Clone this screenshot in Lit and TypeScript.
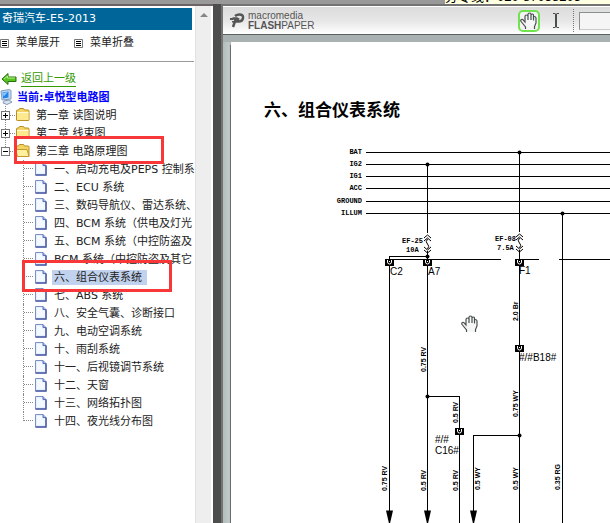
import { LitElement, html, svg, css } from "lit";
import { customElement } from "lit/decorators.js";

const leaves = [
  "一、启动充电及PEPS 控制系统",
  "二、ECU 系统",
  "三、数码导航仪、雷达系统、",
  "四、BCM 系统（供电及灯光",
  "五、BCM 系统（中控防盗及",
  "BCM 系统（中控防盗及其它",
  "六、组合仪表系统",
  "七、ABS 系统",
  "八、安全气囊、诊断接口",
  "九、电动空调系统",
  "十、雨刮系统",
  "十一、后视镜调节系统",
  "十二、天窗",
  "十三、网络拓扑图",
  "十四、夜光线分布图",
];
const current = 6;

const chapters = [
  { name: "第一章 读图说明", open: false },
  { name: "第二章 线束图", open: false },
  { name: "第三章 电路原理图", open: true },
];

const handPath =
  "M5.5 17v-2L1.5 10Q0 8 1.5 7.5T4 9l1 1V4.500q0-1.500 1.500-1.500T8 4.500V8 2.500Q8 1 9.500 1T11 2.500V8 3.500Q11 2 12.300 2T13.500 3.500V8.500 5.500q0-1 1-1t1.500 1.500v5l-1.500 3.500V17";

const hand = html`<svg width="18" height="18" viewBox="0 0 18 18" aria-hidden="true">
  <path d=${handPath} fill="#f6f6f6" stroke="#48504f" stroke-width="1.2" />
</svg>`;

const listIcon = html`<svg width="9" height="9" viewBox="0 0 9 9" aria-hidden="true">
  <path d="M.5 .5h8v8h-8z" fill="#fff" stroke="#777" />
  <path d="M2 2.500h5M2 4.500h5M2 6.500h5" stroke="#000" />
</svg>`;

const folderIcon = (open: boolean) => html`<svg width="16" height="14" viewBox="0 0 16 14" aria-hidden="true">
  <path d="M1.500 12V3q0-1 1-1h1l1-1.500h4L9.500 2H13q1 0 1 1v9q0 .5-1 .5H2.500q-1 0-1-.5z" fill="#f4d465" stroke="#b98f22" />
  ${open
    ? svg`<path d="M.5 5.500h11.500l2 7H2.500z" fill="#fff0a0" stroke="#c49a2c" />`
    : svg`<path d="M2 4.500h11.500v7.500H2z" fill="#ffe98e" /><path d="M2 4.500h11.500" stroke="#fffbd8" />`}
</svg>`;

const pageIcon = html`<svg width="14" height="14" viewBox="0 0 14 14" aria-hidden="true">
  <path d="M1.500 .5h7.500l3 3v9.500h-10.500z" fill="#e3f0ff" stroke="#7f8fc4" />
  <path d="M3 2h5v3h3v6H3z" fill="#fff" opacity=".6" />
  <path d="M12 3.500v9.500H1.500" fill="none" stroke="#4f5ea6" stroke-width="1.500" />
  <path d="M9 .5v3h3" fill="#9db9ee" stroke="#5b6db5" />
</svg>`;

const buses: [string, number][] = [
  ["BAT", 152], ["IG2", 164], ["IG1", 176], ["ACC", 188], ["GROUND", 201], ["ILLUM", 213],
];
const wires: [string, number, number][] = [
  ["0.75 RV", 426, 372], ["0.5 RV", 458, 423], ["0.75 RV", 387, 491], ["0.5 RV", 426, 491],
  ["0.5 RV", 458, 491], ["0.5 WY", 480, 490], ["2.0 Br", 518, 321], ["0.75 WY", 518, 417],
  ["0.5 WY", 518, 490], ["0.35 RG", 560, 490],
];
const dots = [[427, 164], [519, 152], [562, 213], [427, 256], [427, 396], [519, 435]];
const plugs = [[389, 262], [427, 262], [519, 262], [519, 348], [459, 431]];
const fuses = [[427, 235], [519, 234]];
const arrows = [389, 427, 473];

@customElement("app-root")
export class AppRoot extends LitElement {
  static styles = css`
    :host {
      display: flex;
      flex-direction: column;
      height: 100vh;
      overflow: hidden;
      background: #fff;
      color: #222;
      font: 11px/18px "DejaVu Sans", "Noto Sans CJK SC", sans-serif;
    }
    * { box-sizing: border-box; }
    svg { display: block; flex: none; }
    a { color: inherit; text-decoration: none; }
    button { border: 0; padding: 0; background: none; font: inherit; color: inherit; }
    .strip {
      display: flex;
      justify-content: flex-end;
      align-items: flex-end;
      flex: none;
      height: 4px;
      overflow: hidden;
      background: #999;
    }
    .notice {
      width: 165px;
      height: 16px;
      background: #ffffe1;
      color: #000;
      font: 13px/18px "Liberation Sans", "Noto Sans CJK SC", sans-serif;
      white-space: nowrap;
    }
    .frames { display: flex; flex: 1; min-height: 0; }
    .side { display: flex; flex: none; width: 213px; border-top: 2px solid #6b6365; overflow: hidden; }
    .menu { flex: 1; min-width: 0; overflow: hidden; white-space: nowrap; }
    h1 {
      margin: 2px 3px 0 0;
      padding: 0 2px;
      height: 22px;
      background: #069;
      color: #fff;
      font: 11px/22px "DejaVu Sans", "Noto Sans CJK SC", sans-serif;
    }
    .tools { display: flex; height: 32px; margin-right: 1px; padding-bottom: 5px; gap: 14px; align-items: center; border-bottom: 1px solid #999; }
    .tools button { display: flex; align-items: center; gap: 7px; }
    .back { display: flex; align-items: center; height: 19px; margin-top: 7px; gap: 4px; padding-left: 1px; color: #390; }
    .back span { border-bottom: 1px solid #390; line-height: 15px; }
    .now { display: flex; align-items: center; height: 18px; gap: 4px; color: #00f; font-weight: bold; }
    .now span { padding-top: 2px; }
    ul { margin: 0; padding: 0; list-style: none; }
    .chapter { display: flex; align-items: center; height: 18px; position: relative; }
    .chapter button {
      width: 9px;
      height: 9px;
      margin-left: 1px;
      border: 1px solid #777;
      background: #fff;
      color: #000;
      display: grid;
      place-items: center;
    }
    .dash { width: 5px; border-top: 1px dotted #888; }
    .stem { position: absolute; left: 5px; top: 14px; height: 9px; border-left: 1px dotted #888; }
    .top { top: 0; height: 5px; }
    .chapter a { padding: 2px 0 0 5px; }
    .leaves { margin-left: 23px; }
    .leaf { position: relative; display: flex; align-items: center; height: 18px; }
    .leaf::before {
      content: "";
      flex: none;
      width: 10px;
      height: 18px;
      border-left: 1px dotted #888;
      background: repeating-linear-gradient(90deg, #888 0 1px, transparent 1px 2px) 0 8px / 100% 1px no-repeat;
    }
    .leaf:last-child::before { height: 9px; align-self: flex-start; }
    .leaf a { margin-left: 4px; padding: 0 2px; line-height: 15px; }
    .picked a { background: #c1d2ee; padding-right: 5px; }
    .mark { position: absolute; border: 3px solid #f83838; width: 150px; z-index: 1; }
    .mark-chapter { left: 14px; top: -6px; height: 28px; }
    .mark-leaf { left: -1px; top: -8px; height: 32px; }
    .scroll { width: 18px; background: #eee; border-left: 1px solid #e2e2e2; border-right: 2px solid #fff; }
    .scroll button { display: flex; justify-content: center; width: 100%; padding-top: 7px; }
    .split { flex: none; width: 8px; background: #4d4d4d; }
    .viewer {
      display: flex;
      flex-direction: column;
      flex: 1;
      min-width: 0;
      border: solid #737373;
      border-width: 2px 0 0 2px;
      background: linear-gradient(90deg, #b3bebc, #c0cac8 6px, #a9b2b1 8px);
    }
    .bar {
      display: flex;
      align-items: center;
      flex: none;
      height: 29px;
      border-top: 1px solid #fff;
      border-bottom: 1px solid #59605f;
      background: linear-gradient(#dcdcdc, #e6e6e6 50%, #fff);
      overflow: hidden;
    }
    .logo { margin-left: 7px; }
    .brand { margin-left: 3px; width: 66px; color: #555; font: 10px/10px "Liberation Sans", sans-serif; }
    .brand div { white-space: nowrap; }
    .controls { display: flex; align-items: center; margin-left: auto; }
    .grab { display: grid; place-items: center; width: 22px; height: 22px; border: 2px solid #71e34f; border-radius: 5px; background: #f4f4f4; }
    .select { margin-left: 12px; }
    .rule { height: 23px; margin: 0 5px 0 13px; border-left: 1px dotted #777; }
    input { width: 31px; height: 18px; border: solid #8a8f8f; border-width: 1px 0 1px 1px; border-bottom-color: #ccc; background: #f5f5f5; padding: 0; }
    .desk { display: flex; flex: 1; min-height: 0; padding: 7px 0 0 8px; background: linear-gradient(#a9b2b1, #a9b2b1) no-repeat 0 0 / 100% 7px; }
    .paper { flex: 1; min-width: 0; background: #fff; box-shadow: -1px 3px 0 #68706f; overflow: hidden; }
    .line { stroke: #000; stroke-width: 1; fill: none; shape-rendering: crispEdges; }
    .title { font: bold 17px "Noto Sans CJK SC", sans-serif; }
    .tag { font: bold 7px "Liberation Mono", monospace; }
    .wire { font: bold 7px "Liberation Sans", sans-serif; }
    .pin { font: 10px "Liberation Sans", sans-serif; }
    .end { text-anchor: end; }
  `;

  private diagram() {
    return html`<svg width="100%" height="100%" role="img" aria-label="六、组合仪表系统">
      <g transform="translate(-231 -42)">
        <text class="title" x="264" y="116">六、组合仪表系统</text>
        ${buses.map(([name, y]) => svg`
          <text class="tag end" x="362" y=${y + 2}>${name}</text>
          <path class="line" d="M366 ${y}.5H3000" />`)}
        <path class="line" d="M427.500 164V233M427.500 251V523M519.500 152V232M519.500 250V523M562.500 213V523" />
        <path class="line" d="M427.500 256.500H389.500V511M385 259.500H501M515 259.500H539M559 259.500H3000" />
        <path class="line" d="M427.500 396.500H459.500V523M519.500 435.500H473.500V511" />
        ${dots.map(([x, y]) => svg`<circle cx="${x}.5" cy="${y}.5" r="2" />`)}
        ${plugs.map(([x, y]) => svg`
          <rect x=${x - 4} y=${y - 3} width="9" height="7" />
          <path d="M${x - 1.5} ${y - 2}v2q0 2 2 2t2-2v-2M${x + 0.5} ${y - 1}v1" fill="none" stroke="#fff" />`)}
        ${fuses.map(([x, y]) => svg`
          <path transform="translate(${x} ${y})" fill="none" stroke="#000"
            d="M-3 3L.5 0 4 3M-3 6L.5 3 4 6M.5 4Q-2 7 .5 9T.5 14M-3 12L.5 15 4 12M-3 15L.5 18 4 15" />`)}
        ${arrows.map((x) => svg`<path d="M${x - 3} 510.500h7l-3 13h-1z" />`)}
        ${wires.map(([name, x, y]) => svg`<text class="wire" transform="translate(${x} ${y}) rotate(-90)">${name}</text>`)}
        <text class="tag" x="402" y="243">EF-25</text>
        <text class="tag" x="406" y="252">10A</text>
        <text class="tag" x="495" y="241">EF-08</text>
        <text class="tag" x="497" y="250">7.5A</text>
        <text class="pin" x="390" y="275">C2</text>
        <text class="pin" x="428" y="275">A7</text>
        <text class="pin" x="519" y="274">F1</text>
        <text class="pin" x="435" y="443">#/#</text>
        <text class="pin" x="435" y="454">C16#</text>
        <text class="pin" x="519" y="361">#/#B18#</text>
        <path transform="translate(461 315)" d=${handPath} fill="#f6f6f6" stroke="#48504f" stroke-width="1.2" />
      </g>
    </svg>`;
  }

  render() {
    return html`
      <div class="strip"><div class="notice">分专线：020-87058205</div></div>
      <div class="frames">
        <aside class="side">
          <nav class="menu">
            <h1>奇瑞汽车-E5-2013</h1>
            <div class="tools">
              <button>${listIcon}菜单展开</button>
              <button>${listIcon}菜单折叠</button>
            </div>
            <a class="back" href="#back">
              <svg width="16" height="12" viewBox="0 0 16 12" aria-hidden="true">
                <path d="M1 6l6-5.500V4h8v4.500H7V11.500z" fill="#58c322" stroke="#24710a" />
                <path d="M3 6l3.500-3v2h7.500" fill="none" stroke="#b7f08a" />
              </svg>
              <span>返回上一级</span>
            </a>
            <div class="now">
              <svg width="13" height="16" viewBox="0 0 13 16" aria-hidden="true">
                <path d="M1 2l8-1.500 2 1v8.500l-9 1z" fill="#c7d8ec" stroke="#7e9dc4" />
                <path d="M2.500 3.500l6-1v6l-5.500 1z" fill="#2383ea" />
                <path d="M3 4l5-1-4.500 4.500z" fill="#8accff" />
                <path d="M4 12l5-1 3 2-5 2.500-4-1.500z" fill="#d9e3ef" stroke="#8397b4" />
              </svg>
              <span>当前:卓悦型电路图</span>
            </div>
            <ul>
              ${chapters.map((c) => html`<li>
                <div class="chapter">
                  <span class="stem top"></span>
                  ${c.open ? "" : html`<span class="stem"></span>`}
                  <button aria-label=${c.name}>
                    <svg width="5" height="5" viewBox="0 0 5 5" aria-hidden="true">
                      <path d=${c.open ? "M0 2.500h5" : "M0 2.500h5M2.500 0v5"} stroke="#000" />
                    </svg>
                  </button>
                  <span class="dash"></span>
                  ${folderIcon(c.open)}
                  <a href="#chapter">${c.name}</a>
                  ${c.open ? html`<span class="mark mark-chapter"></span>` : ""}
                </div>
                ${c.open
                  ? html`<ul class="leaves">
                      ${leaves.map((name, i) => html`<li class=${i === current ? "leaf picked" : "leaf"}>
                        ${pageIcon}<a href="#page">${name}</a>
                        ${i === current ? html`<span class="mark mark-leaf"></span>` : ""}
                      </li>`)}
                    </ul>`
                  : ""}
              </li>`)}
            </ul>
          </nav>
          <div class="scroll">
            <button aria-label="向上滚动">
              <svg width="8" height="4" viewBox="0 0 8 4" aria-hidden="true"><path d="M0 4l4-4 4 4z" fill="#858585" /></svg>
            </button>
          </div>
        </aside>
        <div class="split"></div>
        <main class="viewer">
          <div class="bar">
            <svg class="logo" width="15" height="15" viewBox="0 0 15 15" aria-hidden="true">
              <path d="M3 14L6 5.500H2.500M5 3Q7 1.500 9.500 1.500 13.500 1.500 13 5T8.500 8.500L7 8.500 8.500 5" fill="none" stroke="#555" stroke-width="2.500" />
              <path d="M0 5h3v2H0zM2 8h2v1.500H2z" fill="#555" />
            </svg>
            <div class="brand"><div>macromedia</div><div><b>FLASH</b>PAPER</div></div>
            <div class="controls">
              <button class="grab" aria-label="拖动">${hand}</button>
              <button class="select" aria-label="选择文本">
                <svg width="8" height="15" viewBox="0 0 8 15" aria-hidden="true">
                  <path d="M1 .5h2.500M4.500 .5H7M1 14.500h2.500M4.500 14.500H7" stroke="#48504f" />
                  <path d="M4 1v13" stroke="#48504f" stroke-width="2" />
                </svg>
              </button>
              <span class="rule"></span>
              <input type="text" aria-label="查找" />
            </div>
          </div>
          <div class="desk"><div class="paper">${this.diagram()}</div></div>
        </main>
      </div>
    `;
  }
}
